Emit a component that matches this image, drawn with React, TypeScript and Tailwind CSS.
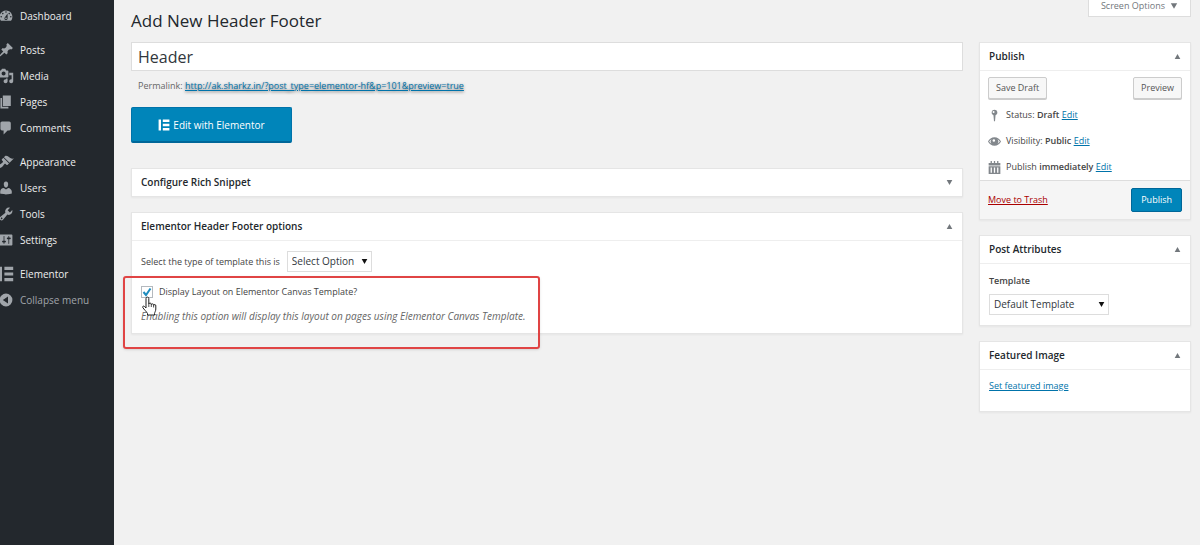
import React, { useState } from 'react';

interface IconProps {
  name: string;
  className?: string;
}

const ICON_PATHS: Record<string, string> = {
  dashboard:
    'M3.76 16h12.48c1.1-1.37 1.76-3.11 1.76-5 0-4.42-3.58-8-8-8s-8 3.58-8 8c0 1.89.66 3.63 1.76 5zM10 4c.55 0 1 .45 1 1s-.45 1-1 1-1-.45-1-1 .45-1 1-1zM6 6c.55 0 1 .45 1 1s-.45 1-1 1-1-.45-1-1 .45-1 1-1zm8 0c.55 0 1 .45 1 1s-.45 1-1 1-1-.45-1-1 .45-1 1-1zm-5.37 5.55L12 7v6c0 1.1-.9 2-2 2s-2-.9-2-2c0-.57.24-1.08.63-1.45zM4 10c.55 0 1 .45 1 1s-.45 1-1 1-1-.45-1-1 .45-1 1-1zm12 0c.55 0 1 .45 1 1s-.45 1-1 1-1-.45-1-1 .45-1 1-1zm-5 3c0-.55-.45-1-1-1s-1 .45-1 1 .45 1 1 1 1-.45 1-1z',
  post: 'M10.44 3.02l1.82-1.82 6.36 6.35-1.83 1.82c-1.05-.68-2.48-.57-3.41.36l-.75.75c-.92.93-1.04 2.35-.35 3.41l-1.83 1.82-2.41-2.41-2.8 2.79c-.42.42-3.38 2.71-3.8 2.29s1.86-3.39 2.28-3.81l2.79-2.79L4.1 9.36l1.83-1.82c1.05.69 2.48.57 3.4-.36l.75-.75c.93-.92 1.05-2.35.36-3.41z',
  media:
    'M13 11V4c0-.55-.45-1-1-1h-1.67L9 1H5L3.67 3H2c-.55 0-1 .45-1 1v7c0 .55.45 1 1 1h10c.55 0 1-.45 1-1zM7 4.5c1.38 0 2.5 1.12 2.5 2.5S8.38 9.5 7 9.5 4.5 8.38 4.5 7 5.62 4.5 7 4.5zM14 6h5v10.5c0 1.38-1.12 2.5-2.5 2.5S14 17.88 14 16.5s1.12-2.5 2.5-2.5c.17 0 .34.02.5.05V9h-3V6zm-4 8.05V13h2v3.5c0 1.38-1.12 2.5-2.5 2.5S7 17.88 7 16.5 8.12 14 9.5 14c.17 0 .34.02.5.05z',
  page: 'M6 15V2h10v13H6zm-1 1h8v2H3V5h2v11z',
  comments:
    'M5 2h9c1.1 0 2 .9 2 2v7c0 1.1-.9 2-2 2h-2l-5 5v-5H5c-1.1 0-2-.9-2-2V4c0-1.1.9-2 2-2z',
  appearance:
    'M14.48 11.06L7.41 3.99l1.5-1.5c.5-.56 2.3-.47 3.51.32 1.21.8 1.43 1.28 2.91 2.1 1.18.64 2.45 1.26 4.45.85zm-.71.71L6.7 4.7 4.93 6.47c-.39.39-.39 1.02 0 1.41l1.06 1.06c.39.39.39 1.03 0 1.42-.6.6-1.43 1.11-2.21 1.69-.35.26-.7.53-1.01.84C1.43 14.23.4 16.08 1.4 17.07c.99 1 2.84-.03 4.18-1.36.31-.31.58-.66.85-1.02.57-.78 1.08-1.61 1.69-2.21.39-.39 1.02-.39 1.41 0l1.06 1.06c.39.39 1.02.39 1.41 0z',
  users:
    'M10 9.25c-2.27 0-2.73-3.44-2.73-3.44C7 4.02 7.82 2 9.97 2c2.16 0 2.98 2.02 2.71 3.81 0 0-.41 3.44-2.68 3.44zm0 2.57L12.72 10c2.39 0 4.52 2.33 4.52 4.53v2.49s-3.65 1.13-7.24 1.13c-3.65 0-7.24-1.13-7.24-1.13v-2.49c0-2.25 1.94-4.48 4.47-4.48z',
  tools:
    'M16.68 9.77c-1.34 1.34-3.3 1.67-4.95.99l-5.41 6.52c-.99.99-2.59.99-3.58 0s-.99-2.59 0-3.57l6.52-5.42c-.68-1.65-.35-3.61.99-4.95 1.28-1.28 3.12-1.62 4.72-1.06l-2.89 2.89 2.82 2.82 2.86-2.87c.53 1.58.18 3.39-1.08 4.65zM3.81 16.21c.4.39 1.04.39 1.43 0 .4-.4.4-1.04 0-1.43-.39-.4-1.03-.4-1.43 0-.39.39-.39 1.03 0 1.43z',
  settings:
    'M18 16V4c0-.55-.45-1-1-1H3c-.55 0-1 .45-1 1v12c0 .55.45 1 1 1h14c.55 0 1-.45 1-1zM8 11h1c.55 0 1 .45 1 1s-.45 1-1 1H8v1.5c0 .28-.22.5-.5.5s-.5-.22-.5-.5V13H6c-.55 0-1-.45-1-1s.45-1 1-1h1V5.5c0-.28.22-.5.5-.5s.5.22.5.5V11zm5-2h-1c-.55 0-1-.45-1-1s.45-1 1-1h1V5.5c0-.28.22-.5.5-.5s.5.22.5.5V7h1c.55 0 1 .45 1 1s-.45 1-1 1h-1v5.5c0 .28-.22.5-.5.5s-.5-.22-.5-.5V9z',
  elementor: 'M1 1h4v18H1zM8 1h11v4H8zM8 8h11v4H8zM8 15h11v4H8z',
  collapse: 'M10 2a8 8 0 1 0 0 16 8 8 0 0 0 0-16zm2.5 3.5v9L6 10z',
  pin: 'M10 1a4.5 4.5 0 0 0-1.6 8.7L9.2 19h1.6l.8-9.3A4.5 4.5 0 0 0 10 1zM8.6 3.2a1.5 1.5 0 1 1 0 3 1.5 1.5 0 0 1 0-3z',
  eye: 'M10 3.5C5.5 3.5 2 6 0 10c2 4 5.5 6.5 10 6.5s8-2.5 10-6.5c-2-4-5.5-6.5-10-6.5zM5.5 6.4a5.5 5.5 0 0 0 0 7.2C4 12.8 2.7 11.6 1.8 10c.9-1.6 2.2-2.8 3.7-3.6zm9 0c1.5.8 2.8 2 3.7 3.6-.9 1.6-2.2 2.8-3.7 3.6a5.5 5.5 0 0 0 0-7.2zM9 6.5a2 2 0 1 1 0 4 2 2 0 0 1 0-4z',
  calendar:
    'M4 0h2v3h3V0h2v3h3V0h2v3h3v4H1V3h3zM1 8h18v12H1zM4 10v8h2v-8zm5 0v8h2v-8zm5 0v8h2v-8z',
  down: 'M2 3h16l-8 14z',
  up: 'M2 17h16L10 3z',
};

function Icon({ name, className = '' }: IconProps) {
  return (
    <svg viewBox="0 0 20 20" fill="currentColor" fillRule="evenodd" aria-hidden="true" className={`shrink-0 ${className}`}>
      <path d={ICON_PATHS[name]} />
    </svg>
  );
}

const menuGroups = [
  [{ label: 'Dashboard', icon: 'dashboard' }],
  [
    { label: 'Posts', icon: 'post' },
    { label: 'Media', icon: 'media' },
    { label: 'Pages', icon: 'page' },
    { label: 'Comments', icon: 'comments' },
  ],
  [
    { label: 'Appearance', icon: 'appearance' },
    { label: 'Users', icon: 'users' },
    { label: 'Tools', icon: 'tools' },
    { label: 'Settings', icon: 'settings' },
  ],
  [{ label: 'Elementor', icon: 'elementor' }],
];

function Sidebar() {
  return (
    <aside className="w-[114px] shrink-0 bg-[#23282d] pt-[3px]">
      <nav className="-ml-0.5 flex flex-col gap-2">
        {menuGroups.map((group) => (
          <ul key={group[0].label}>
            {group.map((item) => (
              <li key={item.label}>
                <a href="#" className="flex h-[26px] items-center gap-[6px] text-[10px] text-[#eee]">
                  <Icon name={item.icon} className="h-4 w-4 text-[#a0a5aa]" />
                  {item.label}
                </a>
              </li>
            ))}
          </ul>
        ))}
      </nav>
      <button type="button" className="-ml-0.5 flex h-[26px] items-center gap-[6px] text-[10px] text-[#a0a5aa]">
        <Icon name="collapse" className="h-4 w-4" />
        Collapse menu
      </button>
    </aside>
  );
}

interface PostboxProps {
  title: string;
  defaultOpen?: boolean;
  children?: React.ReactNode;
}

function Postbox({ title, defaultOpen = true, children }: PostboxProps) {
  const [open, setOpen] = useState(defaultOpen);

  return (
    <section className="border border-[#e5e5e5] bg-white shadow-xs">
      <h2>
        <button
          type="button"
          aria-expanded={open}
          onClick={() => setOpen(!open)}
          className="flex h-[27px] w-full items-center justify-between px-[9px] text-[10px] font-semibold text-[#23282d]"
        >
          {title}
          <Icon name={open ? 'up' : 'down'} className="h-[7px] w-[7px] text-[#72777c]" />
        </button>
      </h2>
      {open && children && <div className="border-t border-[#eee]">{children}</div>}
    </section>
  );
}

interface SelectProps {
  id: string;
  options: string[];
  className: string;
}

function Select({ id, options, className }: SelectProps) {
  return (
    <span className="relative inline-flex items-center">
      <select
        id={id}
        className={`h-[21px] appearance-none border border-[#ddd] bg-white px-1 text-[10px] text-[#32373c] ${className}`}
      >
        {options.map((option) => (
          <option key={option}>{option}</option>
        ))}
      </select>
      <Icon name="down" className="pointer-events-none absolute right-1 h-[7px] w-[7px] text-[#111]" />
    </span>
  );
}

function PublishBox() {
  const rows = [
    { icon: 'pin', label: 'Status: ', value: 'Draft' },
    { icon: 'eye', label: 'Visibility: ', value: 'Public' },
    { icon: 'calendar', label: 'Publish ', value: 'immediately' },
  ];
  const secondary = 'h-[22px] rounded-xs border border-[#ccc] bg-[#f7f7f7] px-[7px] text-[9px] text-[#555] shadow-[0_1px_0_#ccc]';

  return (
    <Postbox title="Publish">
      <div className="flex justify-between px-2 pt-[6px]">
        <button type="button" className={secondary}>
          Save Draft
        </button>
        <button type="button" className={secondary}>
          Preview
        </button>
      </div>
      <ul className="px-2 pt-[3px] text-[9px]">
        {rows.map((row) => (
          <li key={row.icon} className="flex h-[26px] items-center gap-[5px]">
            <Icon name={row.icon} className="h-[13px] w-[13px] text-[#82878c]" />
            <span>
              {row.label}
              <b className="font-semibold">{row.value}</b>{' '}
              <a href="#" className="text-[#0073aa] underline">
                Edit
              </a>
            </span>
          </li>
        ))}
      </ul>
      <div className="flex items-center justify-between border-t border-[#ddd] bg-[#f5f5f5] px-2 py-[7px]">
        <a href="#" className="text-[9px] text-[#a00] underline">
          Move to Trash
        </a>
        <button
          type="button"
          className="h-6 rounded-xs border border-[#006799] bg-[#0085ba] px-[9px] text-[9px] text-white"
        >
          Publish
        </button>
      </div>
    </Postbox>
  );
}

function HandCursor() {
  return (
    <svg viewBox="0 0 16 20" aria-hidden="true" className="pointer-events-none absolute top-[10px] left-0 z-10 h-5 w-4">
      <path
        d="M5 12V2.5a1.4 1.4 0 0 1 2.8 0V8a1.3 1.3 0 0 1 2.5 0v.6a1.2 1.2 0 0 1 2.3.3v.6a1.1 1.1 0 0 1 2.2.4V13c0 2-1 3-1.3 4.5V19H6.5v-1.5C5.5 15.500 3 13.500 1.8 11.600c-.7-1.2.8-2.1 1.7-1.100z"
        fill="#fff"
        stroke="#222"
        strokeWidth="1"
        strokeLinejoin="round"
      />
      <path d="M7.8 8v3M10.3 8.500V11M12.6 9.500v2" stroke="#222" strokeWidth=".8" />
    </svg>
  );
}

function TemplateOptions() {
  const [checked, setChecked] = useState(true);

  return (
    <Postbox title="Elementor Header Footer options">
      <div className="px-[9px] pt-[10px] pb-[9px] text-[9px]">
        <div className="flex items-center gap-[7px]">
          <label htmlFor="template-type">Select the type of template this is</label>
          <Select id="template-type" options={['Select Option', 'Header', 'Footer']} className="w-[85px]" />
        </div>
        <div className="relative pt-[12px]">
          <div className="flex h-4 items-center gap-[6px]">
            <span className="relative h-3 w-3">
              <input
                id="display-canvas"
                type="checkbox"
                checked={checked}
                onChange={(e) => setChecked(e.target.checked)}
                className="block h-3 w-3 appearance-none border border-[#b4b9be] bg-white"
              />
              {checked && (
                <svg viewBox="0 0 12 12" fill="none" stroke="#1e8cbe" strokeWidth="2" aria-hidden="true" className="pointer-events-none absolute inset-0">
                  <path d="M2.5 6l2.5 3 4.5-6.5" />
                </svg>
              )}
              <HandCursor />
            </span>
            <label htmlFor="display-canvas">Display Layout on Elementor Canvas Template?</label>
          </div>
          <p className="pt-2 text-[10px] leading-4 text-[#666] italic">
            Enabling this option will display this layout on pages using Elementor Canvas Template.
          </p>
          {/* callout around the canvas option */}
          <div className="pointer-events-none absolute top-1 -left-[18px] h-[73px] w-[417px] rounded-[3px] border-2 border-[#e04444] shadow-sm" />
        </div>
      </div>
    </Postbox>
  );
}

export default function App() {
  const [title, setTitle] = useState('Header');

  return (
    <div className="flex min-h-screen bg-[#f1f1f1] font-['Open_Sans','Noto_Sans',sans-serif] text-[#444]">
      <Sidebar />
      <main className="min-w-0 flex-1 pr-[9px] pl-[17px]">
        <header className="flex h-[42px] items-start justify-between">
          <h1 className="pt-[9px] text-[17px] leading-6 text-[#23282d]">Add New Header Footer</h1>
          <button
            type="button"
            className="flex h-[17px] items-center gap-[5px] border border-t-0 border-[#ddd] bg-white px-3 pb-1 text-[9px] text-[#72777c]"
          >
            Screen Options
            <Icon name="down" className="h-2 w-2" />
          </button>
        </header>

        <div className="flex items-start gap-4">
          <div className="min-w-0 flex-1">
            <input
              type="text"
              aria-label="Title"
              value={title}
              onChange={(e) => setTitle(e.target.value)}
              className="block h-[29px] w-full border border-[#ddd] bg-white px-[6px] text-[16px] text-[#32373c]"
            />
            <p className="px-[7px] pt-[7px] text-[9px] leading-4 text-[#666]">
              Permalink:{' '}
              <a href="#" className="text-[#0073aa] underline text-shadow-[0_1px_3px_#666]">
                http://ak.sharkz.in/?post_type=elementor-hf&amp;p=101&amp;preview=true
              </a>
            </p>
            <button
              type="button"
              className="mt-[13px] flex h-9 w-[161px] items-center justify-center gap-[3px] rounded-xs border border-[#0073aa] border-b-[#006799] bg-[#0085ba] text-[10px] text-white shadow-[inset_0_-1px_0_#006799]"
            >
              <Icon name="elementor" className="h-3 w-3" />
              Edit with Elementor
            </button>
            <div className="flex flex-col gap-[15px] pt-[25px]">
              <Postbox title="Configure Rich Snippet" defaultOpen={false} />
              <TemplateOptions />
            </div>
          </div>

          <div className="flex w-[212px] shrink-0 flex-col gap-[15px]">
            <PublishBox />
            <Postbox title="Post Attributes">
              <div className="flex flex-col items-start gap-[5px] px-[9px] pt-[9px] pb-[10px]">
                <label htmlFor="page-template" className="text-[9px] leading-4 font-semibold">
                  Template
                </label>
                <Select id="page-template" options={['Default Template']} className="w-[120px]" />
              </div>
            </Postbox>
            <Postbox title="Featured Image">
              <div className="px-[9px] pt-1 pb-[13px] text-[9px] leading-6">
                <a href="#" className="text-[#0073aa] underline">
                  Set featured image
                </a>
              </div>
            </Postbox>
          </div>
        </div>
      </main>
    </div>
  );
}
